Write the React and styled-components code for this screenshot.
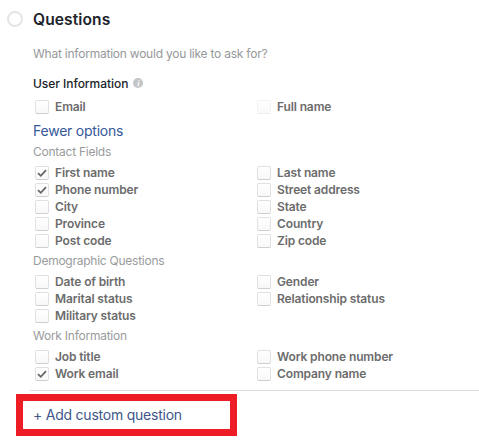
import React from 'react';
import styled, { createGlobalStyle } from 'styled-components';

const GlobalStyle = createGlobalStyle`
  body {
    margin: 0;
    background: #fff;
    font-family: Inter, 'Liberation Sans', sans-serif;
    overflow: hidden;
  }
`;

const Panel = styled.section`
  box-sizing: border-box;
  width: 479px;
  height: 440px;
  padding-top: 7px;
`;

const Header = styled.header`
  display: flex;
  align-items: center;
  gap: 10px;
  height: 24px;
  padding-left: 7px;
`;

const StepCircle = styled.span`
  box-sizing: border-box;
  width: 16px;
  height: 16px;
  border: 2px solid #e4e5e6;
  border-radius: 50%;
`;

const Title = styled.h1`
  margin: 2px 0 0;
  font-size: 15.6px;
  line-height: 24px;
  font-weight: 600;
  letter-spacing: 0.08px;
  color: #20232a;
`;

const Body = styled.div`
  padding-left: 33px;
`;

const Prompt = styled.p`
  margin: 13px 0 0;
  font-size: 12px;
  line-height: 20px;
  letter-spacing: -0.23px;
  color: #96989a;
`;

const Subtitle = styled.h2`
  display: flex;
  align-items: center;
  gap: 5px;
  margin: 9px 0 5px;
  height: 20px;
  font-size: 12px;
  font-weight: 500;
  letter-spacing: -0.04px;
  color: #20232a;
`;

const InfoDot = styled.span`
  display: flex;
  align-items: center;
  justify-content: center;
  width: 10px;
  height: 10px;
  border-radius: 50%;
  background: #c4c5c7;
  color: #fff;
  font: italic bold 8px 'Liberation Serif', serif;
`;

const Columns = styled.div`
  display: grid;
  grid-template-columns: 222px 1fr;
`;

const Option = styled.label`
  display: flex;
  align-items: center;
  gap: 6px;
  height: 17px;
  padding-left: 2px;
  font-size: 12px;
  font-weight: 600;
  letter-spacing: -0.13px;
  color: #6c6c6c;
  white-space: nowrap;
`;

const Box = styled.span`
  box-sizing: border-box;
  display: flex;
  align-items: center;
  justify-content: center;
  width: 14px;
  height: 14px;
  border: 1px solid ${props => (props.$faded ? '#f3f3f3' : '#e0e0e0')};
  border-bottom-color: ${props => (props.$faded ? '#ececec' : '#cfcfcf')};
  border-radius: 2px;
  background: linear-gradient(#fff, #f8f8f8);
`;

const GroupTitle = styled.h3`
  margin: 2px 0 3px;
  font-size: 12px;
  line-height: 19px;
  font-weight: 400;
  letter-spacing: -0.25px;
  color: #999b9d;
`;

const Link = styled.a`
  display: block;
  font-size: 14px;
  line-height: 20px;
  letter-spacing: -0.23px;
  color: ${props => props.$color || '#365899'};
`;

const FewerLink = styled(Link)`
  margin: 6px 0 -1px;
`;

const Divider = styled.hr`
  margin: 8px 0 3px 30px;
  height: 1px;
  border: 0;
  background: #dcdddd;
`;

const Highlight = styled.div`
  box-sizing: border-box;
  display: flex;
  align-items: center;
  width: 221px;
  height: 42px;
  margin-left: 16px;
  padding-left: 10px;
  border: 7px solid #ee1c25;
`;

const groups = [
  {
    title: 'Contact Fields',
    left: ['First name', 'Phone number', 'City', 'Province', 'Post code'],
    right: ['Last name', 'Street address', 'State', 'Country', 'Zip code'],
  },
  {
    title: 'Demographic Questions',
    left: ['Date of birth', 'Marital status', 'Military status'],
    right: ['Gender', 'Relationship status'],
  },
  {
    title: 'Work Information',
    left: ['Job title', 'Work email'],
    right: ['Work phone number', 'Company name'],
  },
];

const selected = ['First name', 'Phone number', 'Work email'];

const Check = () => (
  <svg width="10" height="10" viewBox="0 0 10 10" fill="none">
    <path d="M1 5.2 3.8 7.8 9 2.2" stroke="#666" strokeWidth="1.8" />
  </svg>
);

const Field = ({ name, faded }) => (
  <Option>
    <Box $faded={faded}>{selected.includes(name) && <Check />}</Box>
    {name}
  </Option>
);

const FieldColumns = ({ left, right }) => (
  <Columns>
    <div>
      {left.map(name => (
        <Field key={name} name={name} />
      ))}
    </div>
    <div>
      {right.map(name => (
        <Field key={name} name={name} faded={name === 'Full name'} />
      ))}
    </div>
  </Columns>
);

const App = () => (
  <>
    <GlobalStyle />
    <Panel>
      <Header>
        <StepCircle />
        <Title>Questions</Title>
      </Header>
      <Body>
        <Prompt>What information would you like to ask for?</Prompt>
        <Subtitle>
          User Information <InfoDot>i</InfoDot>
        </Subtitle>
        <FieldColumns left={['Email']} right={['Full name']} />
        <FewerLink>Fewer options</FewerLink>
        {groups.map(group => (
          <div key={group.title}>
            <GroupTitle>{group.title}</GroupTitle>
            <FieldColumns left={group.left} right={group.right} />
          </div>
        ))}
      </Body>
      <Divider />
      <Highlight>
        <Link $color="#40568a">+ Add custom question</Link>
      </Highlight>
    </Panel>
  </>
);

export default App;
